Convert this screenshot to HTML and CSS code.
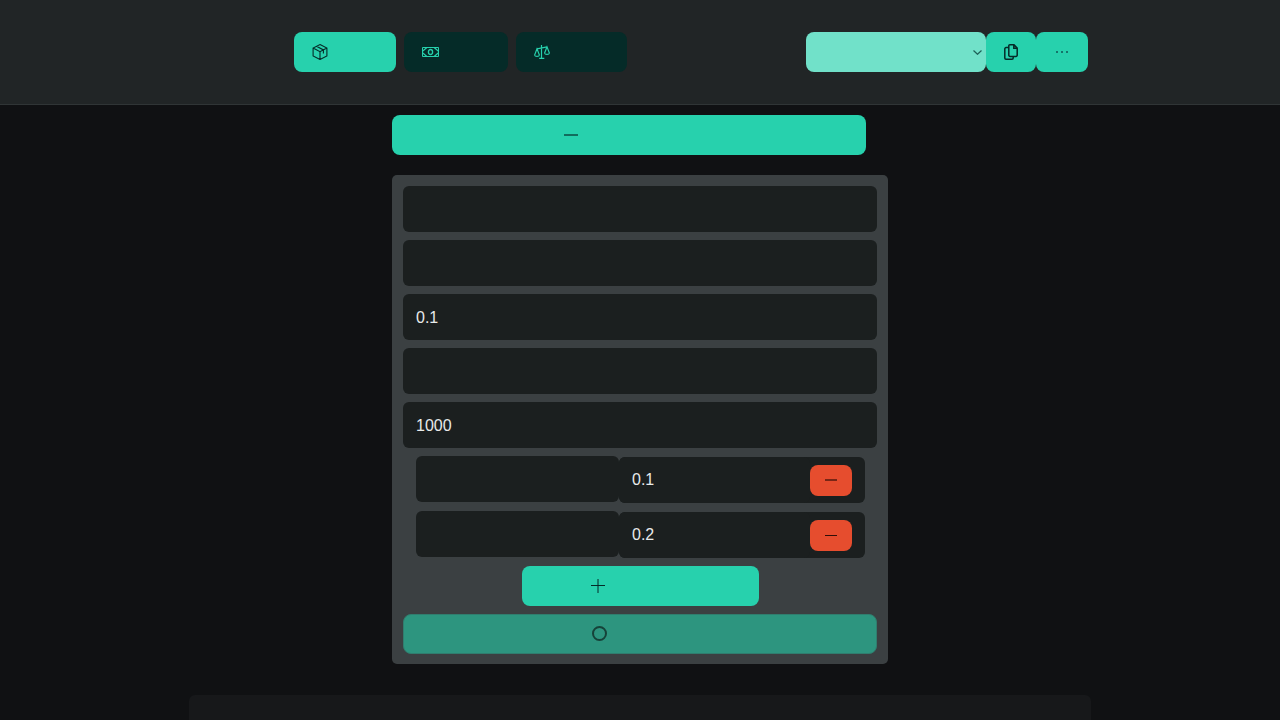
FILE: index.html
```html
<!DOCTYPE html>
<html lang="en">
<head>
<meta charset="utf-8">
<meta name="viewport" content="width=device-width, initial-scale=1">
<title>Items</title>
<link rel="stylesheet" href="styles.css">
</head>
<body>
<header class="topbar">
  <nav class="tabs" aria-label="Sections">
    <button class="btn tab tab-items" type="button" aria-label="Items">
      <svg class="icon" width="16" height="16" viewBox="0 0 16 16"><path stroke-width="1.1" d="M8 .6 14.9 4.1V11.9L8 15.5 1.1 11.9V4.1ZM1.1 4.1 8 7.7 14.9 4.1M8 7.7V15.5M4.5 2.3 11.4 5.9V9.6"/></svg>
    </button>
    <button class="btn tab tab-dark tab-money" type="button" aria-label="Money">
      <svg class="icon" width="17" height="10" viewBox="0 0 17 10"><path d="M.5.5H16.5V9.5H.5Z"/><path d="M.5 4.2 4.9.5M12.1.5 16.5 4.2M16.5 5.8 12.1 9.5M4.9 9.5.5 5.8" stroke-width="1.2"/><ellipse cx="8.5" cy="5" rx="2.1" ry="2.5" stroke-width="1.3"/></svg>
    </button>
    <button class="btn tab tab-dark tab-balance" type="button" aria-label="Balance">
      <svg class="icon" width="16" height="14" viewBox="0 0 16 14"><path stroke-width="1.2" d="M7.5 0V13.5M5.2 13.4H10.3M3 3.8 13 1.8M3 3.8.6 10C.9 11.8 5.1 11.8 5.4 10ZM13 1.8 10.6 8C10.9 9.8 15.1 9.8 15.4 8Z"/></svg>
    </button>
  </nav>
  <div class="actions">
    <div class="picker">
      <select class="select" aria-label="Current list"><option></option></select>
      <svg class="icon chevron" width="9" height="5" viewBox="0 0 9 5"><path stroke-width="1.2" d="M.5.5 4.5 4.3 8.5.5"/></svg>
    </div>
    <button class="btn copy" type="button" aria-label="Copy">
      <svg class="icon" width="14" height="16" viewBox="0 0 14 16"><path stroke-width="1.5" d="M4.5 3.6H2A1.2 1.2 0 0 0 .8 4.8V14A1.2 1.2 0 0 0 2 15.2H8A1.2 1.2 0 0 0 9.2 14V12.5M5.8.8H10L13.2 4V11.2A1.2 1.2 0 0 1 12 12.4H6A1.2 1.2 0 0 1 4.8 11.2V1.8A1 1 0 0 1 5.8.8ZM9.8.8V4.2H13.2"/></svg>
    </button>
    <button class="btn more" type="button" aria-label="More">
      <svg class="dots" width="12" height="2" viewBox="0 0 12 2"><path d="M0 0H2V2H0ZM5 0H7V2H5ZM10 0H12V2H10Z"/></svg>
    </button>
  </div>
</header>
<main class="content">
  <button class="btn toggle" type="button" aria-label="Hide form">
    <svg class="icon" width="14" height="2" viewBox="0 0 14 2"><path stroke-width="1.2" d="M0 1H14"/></svg>
  </button>
  <form class="panel">
    <input class="field field-wide" type="text" aria-label="Name">
    <input class="field field-wide" type="text" aria-label="Description">
    <input class="field field-wide" type="text" value="0.1" aria-label="Amount">
    <input class="field field-wide" type="text" aria-label="Unit">
    <input class="field field-wide" type="text" value="1000" aria-label="Limit">
    <div class="entry">
      <input class="field" type="text" aria-label="First entry name">
      <div class="entry-value">
        <input class="field" type="text" value="0.1" aria-label="First entry value">
        <button class="btn remove" type="button" aria-label="Remove first entry">
          <svg class="icon" width="12" height="2" viewBox="0 0 12 2"><path stroke-width="1.2" d="M0 1H12"/></svg>
        </button>
      </div>
    </div>
    <div class="entry">
      <input class="field" type="text" aria-label="Second entry name">
      <div class="entry-value">
        <input class="field" type="text" value="0.2" aria-label="Second entry value">
        <button class="btn remove" type="button" aria-label="Remove second entry">
          <svg class="icon" width="12" height="1" viewBox="0 0 12 1"><path d="M0 .5H12"/></svg>
        </button>
      </div>
    </div>
    <button class="btn add" type="button" aria-label="Add entry">
      <svg class="icon" width="14" height="14" viewBox="0 0 14 14"><path d="M0 6.5H14M7 0V14"/></svg>
    </button>
    <button class="btn submit" type="submit" aria-label="Save" disabled>
      <svg class="icon" width="16" height="16" viewBox="0 0 16 16"><circle cx="7.5" cy="7.5" r="6.5" stroke-width="2"/></svg>
    </button>
  </form>
</main>
<section class="results" aria-label="Results"></section>
</body>
</html>
```
FILE: styles.css
```css
* {
  box-sizing: border-box;
}

body {
  display: flex;
  flex-direction: column;
  min-height: 100vh;
  margin: 0;
  background: #101113;
  color: #e8eaea;
  font: 16px/24px "Liberation Sans", Arial, sans-serif;
}

.topbar {
  display: flex;
  justify-content: space-between;
  gap: 16px;
  padding: 32px 15% 32px 23%;
  background: #212526;
  border-bottom: 1px solid #303536;
}

.tabs {
  display: flex;
  gap: 8px;
}

.actions {
  display: flex;
}

.btn {
  display: flex;
  align-items: center;
  justify-content: center;
  height: 40px;
  padding: 0;
  border: 0;
  border-radius: 8px;
  background: #27d1ad;
  color: #052b28;
  font: inherit;
}

.icon {
  display: block;
  fill: none;
  stroke: currentColor;
  stroke-width: 1;
}

.tab {
  justify-content: flex-start;
  padding-left: 18px;
}

.tab-dark {
  background: #052b28;
  color: #27d1ad;
}

.tab-items {
  width: 102px;
}

.tab-money {
  width: 104px;
}

.tab-balance {
  width: 111px;
}

.picker {
  position: relative;
  width: 180px;
}

.select {
  width: 100%;
  height: 40px;
  padding: 0 24px 0 16px;
  border: 0;
  border-radius: 8px;
  appearance: none;
  background: #71e1c9;
  color: #052b28;
  font: inherit;
}

.chevron {
  position: absolute;
  top: 50%;
  right: 4px;
  margin-top: -2px;
  color: #1e6158;
  pointer-events: none;
}

.copy {
  width: 50px;
}

.more {
  width: 52px;
}

.dots {
  fill: #14756a;
}

.content {
  display: flex;
  flex-direction: column;
  gap: 20px;
  width: 100%;
  max-width: 496px;
  margin: 10px auto 31px;
}

.toggle {
  width: calc(100% - 22px);
  padding-right: 116px;
}

.panel {
  display: flex;
  flex-direction: column;
  gap: 8px;
  padding: 11px 11px 10px;
  border-radius: 5px;
  background: #3b4042;
}

.field {
  width: 100%;
  min-width: 0;
  height: 46px;
  padding: 0 13px;
  border: 0;
  border-radius: 6px;
  background: #1b1f1f;
  color: inherit;
  font: inherit;
}

.field-wide {
  padding-top: 2px;
}

.entry {
  display: grid;
  grid-template-columns: minmax(0, 203fr) minmax(0, 246fr);
  height: 47px;
  padding: 0 12px 0 13px;
}

.entry-value {
  display: flex;
  align-items: center;
  align-self: end;
  padding-right: 13px;
  border-radius: 6px;
  background: #1b1f1f;
}

.remove {
  flex: none;
  width: 42px;
  height: 31px;
  background: #e64d2e;
  color: #310e08;
}

.add {
  align-self: center;
  width: 50%;
  padding-right: 84px;
}

.submit {
  width: 100%;
  padding-right: 80px;
  border: 1px solid #307d6e;
  background: #2d957f;
  color: #164239;
}

.results {
  flex: 1;
  width: calc(100% - 32px);
  max-width: 902px;
  margin: 0 auto;
  border-radius: 6px 6px 0 0;
  background: #17181a;
}
```
